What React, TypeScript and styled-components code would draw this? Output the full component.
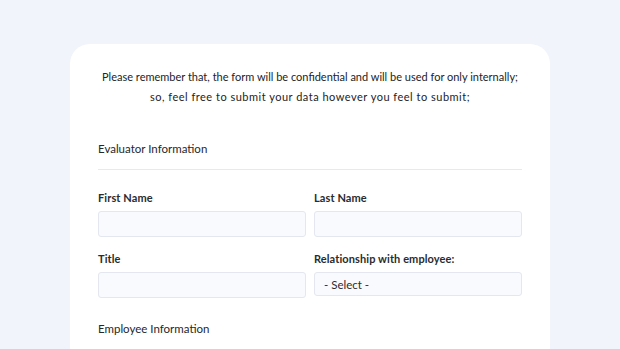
import React from 'react';
import styled, { createGlobalStyle } from 'styled-components';

const GlobalStyle = createGlobalStyle`
  html, body {
    margin: 0;
    padding: 0;
    background: #f2f4fc;
  }

  body {
    font-family: Lato, 'Noto Sans', sans-serif;
    color: #26272b;
  }
`;

const Page = styled.div`
  width: 620px;
  height: 349px;
  overflow: hidden;
  padding-top: 44px;
  box-sizing: border-box;
`;

const Card = styled.section`
  margin: 0 70px;
  height: 360px;
  background: #ffffff;
  border-radius: 20px;
  padding: 23px 28px 0;
  box-sizing: border-box;
`;

const Intro = styled.p`
  margin: 0;
  display: flex;
  flex-direction: column;
  align-items: center;
  font-size: 11px;
  line-height: 20px;
  white-space: nowrap;
  color: #222327;
`;

const IntroLine = styled.span<{ $spacing?: number }>`
  letter-spacing: ${(p) => p.$spacing ?? 0}px;
`;

const SectionTitle = styled.h2<{ $top: number }>`
  margin: ${(p) => p.$top}px 0 0;
  font-size: 11.5px;
  line-height: 20px;
  font-weight: 400;
`;

const Divider = styled.hr`
  margin: 10px 0 0;
  border: 0;
  height: 1px;
  background: #e7e9f0;
`;

const Grid = styled.div`
  display: grid;
  grid-template-columns: 1fr 1fr;
  column-gap: 8px;
  row-gap: 14px;
  margin-top: 20px;
`;

const Field = styled.label`
  display: flex;
  flex-direction: column;
  gap: 5px;
`;

const Label = styled.span`
  font-size: 11px;
  line-height: 16px;
  font-weight: 700;
  letter-spacing: 0.1px;
  color: #2a2b30;
`;

const Input = styled.div<{ $height?: number }>`
  height: ${(p) => p.$height ?? 26}px;
  box-sizing: border-box;
  background: #f9fafe;
  border: 1px solid #e4e7ef;
  border-radius: 3px;
  display: flex;
  align-items: center;
  padding: 0 9px;
  font-size: 11.5px;
  color: #2c2d31;
`;

const App: React.FC = () => {
  return (
    <Page>
      <GlobalStyle />
      <Card>
        <Intro>
          <IntroLine>
            Please remember that, the form will be confidential and will be used for only internally;
          </IntroLine>
          <IntroLine $spacing={0.5}>so, feel free to submit your data however you feel to submit;</IntroLine>
        </Intro>
        <SectionTitle $top={32}>Evaluator Information</SectionTitle>
        <Divider />
        <Grid>
          <Field>
            <Label>First Name</Label>
            <Input />
          </Field>
          <Field>
            <Label>Last Name</Label>
            <Input />
          </Field>
          <Field>
            <Label>Title</Label>
            <Input />
          </Field>
          <Field>
            <Label>Relationship with employee:</Label>
            <Input $height={24}>- Select -</Input>
          </Field>
        </Grid>
        <SectionTitle $top={21}>Employee Information</SectionTitle>
      </Card>
    </Page>
  );
};

export default App;
